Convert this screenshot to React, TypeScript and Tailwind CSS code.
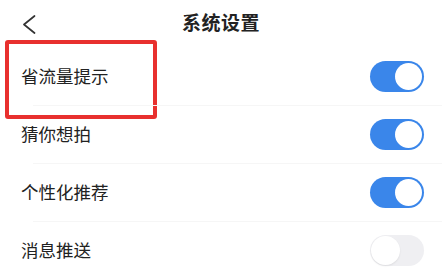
type Row = {
  label: string;
  on: boolean;
};

const rows: Row[] = [
  { label: "省流量提示", on: true },
  { label: "猜你想拍", on: true },
  { label: "个性化推荐", on: true },
  { label: "消息推送", on: false },
];

function Toggle({ on }: { on: boolean }) {
  if (on) {
    return (
      <div className="w-[54px] h-[31px] rounded-full bg-[#3a86ea] flex items-center justify-end p-[2px]">
        <div className="w-[27px] h-[27px] rounded-full bg-white" />
      </div>
    );
  }
  return (
    <div className="w-[54px] h-[31px] rounded-full bg-[#efeff2] flex items-center justify-start p-[1px]">
      <div className="w-[29px] h-[29px] rounded-full bg-white shadow-[0_1px_2px_rgba(0,0,0,0.08)]" />
    </div>
  );
}

export default function App() {
  return (
    <div
      className="w-[442px] h-[280px] bg-white overflow-hidden text-[#222]"
      style={{ fontFamily: '"Noto Sans CJK SC", "Noto Sans", sans-serif' }}
    >
      <div className="relative h-[47px] flex items-center justify-center">
        <svg className="absolute left-[22px] top-[15px]" width="14" height="19" viewBox="0 0 14 19" fill="none">
          <path d="M12.5 1 L2 9.5 L12.5 18" stroke="#333" strokeWidth="1.7" strokeLinecap="round" strokeLinejoin="round" />
        </svg>
        <span className="text-[19px] font-bold tracking-[0.5px] -mt-[3px]">系统设置</span>
      </div>

      <div className="flex flex-col">
        {rows.map((row, i) => (
          <div key={row.label} className="relative h-[58px] flex items-center justify-between pl-[21px] pr-[18px]">
            {i > 0 && <div className="absolute top-0 left-[33px] right-0 h-px bg-[#f6f6f6]" />}
            <span className="text-[17.5px] leading-none">{row.label}</span>
            <Toggle on={row.on} />
            {i === 0 && (
              <div className="absolute left-[5px] top-[-7px] w-[152px] h-[79px] border-[4px] border-[#e8302e] rounded-[3px]" />
            )}
          </div>
        ))}
      </div>
    </div>
  );
}
